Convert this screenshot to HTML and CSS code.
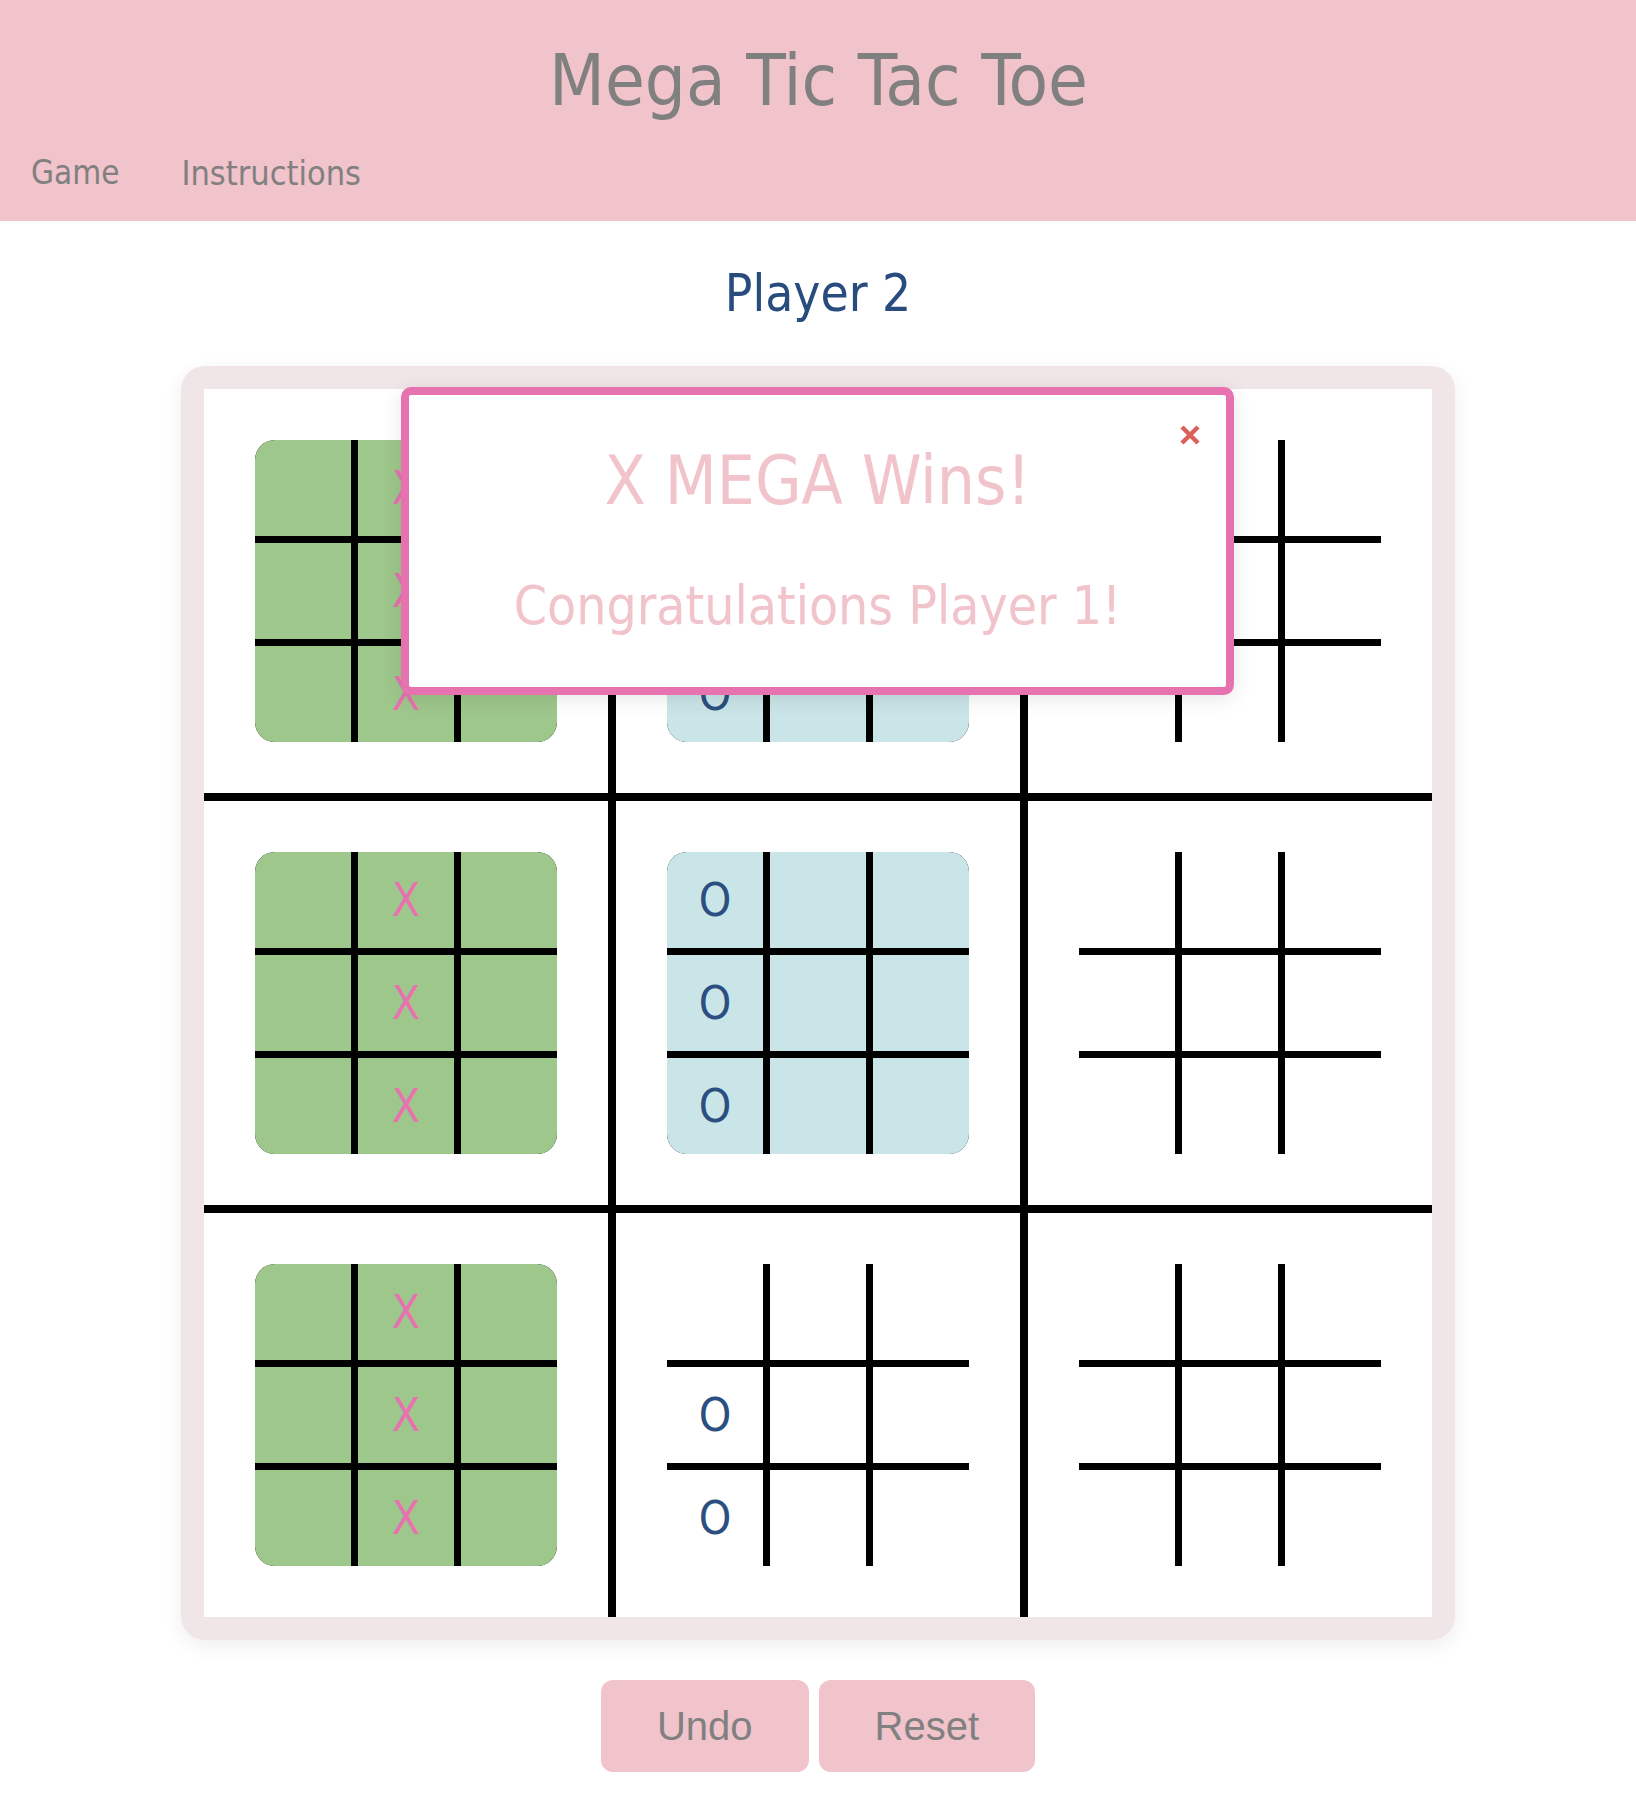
FILE: index.html
```html
<!DOCTYPE html>
<html lang="en">
<head>
<meta charset="utf-8">
<title>Mega Tic Tac Toe</title>
<link rel="stylesheet" href="styles.css">
</head>
<body>
<header class="header">
  <h1 class="title">Mega Tic Tac Toe</h1>
  <nav class="nav">
    <a class="nav-link" href="#">Game</a>
    <a class="nav-link" href="#">Instructions</a>
  </nav>
</header>
<main class="main">
  <h2 class="turn">Player 2</h2>
  <div class="board-wrap">
    <div class="frame">
      <div class="mega">
        <div class="mega-cell">
          <div class="mini won-x">
            <div class="c"></div><div class="c x">X</div><div class="c"></div>
            <div class="c"></div><div class="c x">X</div><div class="c"></div>
            <div class="c"></div><div class="c x">X</div><div class="c"></div>
          </div>
        </div>
        <div class="mega-cell">
          <div class="mini won-o">
            <div class="c o">O</div><div class="c"></div><div class="c"></div>
            <div class="c o">O</div><div class="c"></div><div class="c"></div>
            <div class="c o">O</div><div class="c"></div><div class="c"></div>
          </div>
        </div>
        <div class="mega-cell">
          <div class="mini">
            <div class="c"></div><div class="c"></div><div class="c"></div>
            <div class="c"></div><div class="c"></div><div class="c"></div>
            <div class="c"></div><div class="c"></div><div class="c"></div>
          </div>
        </div>
        <div class="mega-cell">
          <div class="mini won-x">
            <div class="c"></div><div class="c x">X</div><div class="c"></div>
            <div class="c"></div><div class="c x">X</div><div class="c"></div>
            <div class="c"></div><div class="c x">X</div><div class="c"></div>
          </div>
        </div>
        <div class="mega-cell">
          <div class="mini won-o">
            <div class="c o">O</div><div class="c"></div><div class="c"></div>
            <div class="c o">O</div><div class="c"></div><div class="c"></div>
            <div class="c o">O</div><div class="c"></div><div class="c"></div>
          </div>
        </div>
        <div class="mega-cell">
          <div class="mini">
            <div class="c"></div><div class="c"></div><div class="c"></div>
            <div class="c"></div><div class="c"></div><div class="c"></div>
            <div class="c"></div><div class="c"></div><div class="c"></div>
          </div>
        </div>
        <div class="mega-cell">
          <div class="mini won-x">
            <div class="c"></div><div class="c x">X</div><div class="c"></div>
            <div class="c"></div><div class="c x">X</div><div class="c"></div>
            <div class="c"></div><div class="c x">X</div><div class="c"></div>
          </div>
        </div>
        <div class="mega-cell">
          <div class="mini">
            <div class="c"></div><div class="c"></div><div class="c"></div>
            <div class="c o">O</div><div class="c"></div><div class="c"></div>
            <div class="c o">O</div><div class="c"></div><div class="c"></div>
          </div>
        </div>
        <div class="mega-cell">
          <div class="mini">
            <div class="c"></div><div class="c"></div><div class="c"></div>
            <div class="c"></div><div class="c"></div><div class="c"></div>
            <div class="c"></div><div class="c"></div><div class="c"></div>
          </div>
        </div>
      </div>
    </div>
    <div class="popup">
      <button class="close" aria-label="Close">
        <svg width="22" height="22" viewBox="0 0 22 22"><path d="M3 3 L19 19 M19 3 L3 19" stroke="#dc605a" stroke-width="4.5" fill="none"/></svg>
      </button>
      <h2 class="popup-title">X MEGA Wins!</h2>
      <p class="popup-text">Congratulations Player 1!</p>
    </div>
  </div>
  <div class="actions">
    <button class="btn">Undo</button>
    <button class="btn">Reset</button>
  </div>
</main>
</body>
</html>
```
FILE: styles.css
```css
html, body {
  margin: 0;
  padding: 0;
  background: #ffffff;
}
body {
  font-family: "DejaVu Sans Condensed", "DejaVu Sans", sans-serif;
  font-stretch: condensed;
}
.header {
  background: #f1c3cb;
  padding: 40px 0 28px 1px;
}
.title {
  margin: 0;
  text-align: center;
  font-size: 72px;
  line-height: 80px;
  font-weight: normal;
  color: #808080;
}
.nav {
  display: flex;
  margin-top: 33px;
  line-height: 40px;
}
.nav-link {
  padding: 0 30px;
  font-size: 33px;
  color: #808080;
  text-decoration: none;
}
.nav-link + .nav-link {
  padding-left: 32px;
  font-size: 34px;
}
.main {
  display: flex;
  flex-direction: column;
  align-items: center;
}
.turn {
  margin: 43px 0 42px;
  font-size: 51px;
  line-height: 60px;
  font-weight: normal;
  color: #294c7f;
}
.board-wrap {
  position: relative;
}
.frame {
  background: #f0e5e7;
  padding: 23px;
  border-radius: 24px;
  box-shadow: 0 6px 20px rgba(0, 0, 0, 0.07);
}
.mega {
  display: grid;
  grid-template-columns: repeat(3, 404px);
  grid-template-rows: repeat(3, 404px);
  gap: 8px;
  background: #000;
}
.mega-cell {
  background: #fff;
  display: flex;
  align-items: center;
  justify-content: center;
}
.mini {
  display: grid;
  grid-template-columns: repeat(3, 96px);
  grid-template-rows: repeat(3, 96px);
  gap: 7px;
  background: #000;
}
.c {
  background: #fff;
  display: flex;
  align-items: center;
  justify-content: center;
  font-size: 46px;
  line-height: 1;
}
.won-x,
.won-o {
  clip-path: inset(0 round 20px);
}
.won-x .c {
  background: #9ec78b;
}
.won-o .c {
  background: #cae5e8;
}
.x {
  color: #e673b0;
}
.o {
  color: #2a4f80;
}
.popup {
  position: absolute;
  left: 220px;
  top: 21px;
  box-sizing: border-box;
  width: 833px;
  height: 308px;
  border: 8px solid #e673b0;
  border-radius: 10px;
  background: #fff;
  box-shadow: 0 4px 20px rgba(0, 0, 0, 0.1);
  text-align: center;
  padding-top: 46px;
}
.close {
  position: absolute;
  top: 29px;
  right: 25px;
  width: 22px;
  height: 22px;
  padding: 0;
  border: 0;
  background: transparent;
  display: block;
}
.close svg {
  display: block;
}
.popup-title {
  margin: 0;
  font-size: 67px;
  line-height: 80px;
  font-weight: normal;
  color: #f1c3cb;
}
.popup-text {
  margin: 55px 0 0;
  font-size: 53px;
  line-height: 60px;
  color: #f1c3cb;
}
.actions {
  display: flex;
  gap: 10px;
  margin-top: 40px;
}
.btn {
  font-family: "Liberation Sans", Arial, sans-serif;
  font-size: 40px;
  line-height: 46px;
  padding: 23px 56px;
  border: 0;
  border-radius: 12px;
  background: #f1c3cb;
  color: #808080;
}
```
